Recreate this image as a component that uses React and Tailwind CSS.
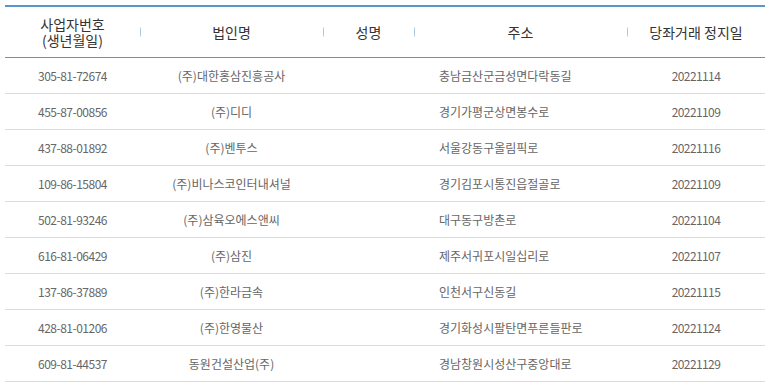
import React from 'react';

const rows = [
  { bizNo: '305-81-72674', corp: '(주)대한홍삼진흥공사', name: '', addr: '충남금산군금성면다락동길', date: '20221114' },
  { bizNo: '455-87-00856', corp: '(주)디디', name: '', addr: '경기가평군상면봉수로', date: '20221109' },
  { bizNo: '437-88-01892', corp: '(주)벤투스', name: '', addr: '서울강동구올림픽로', date: '20221116' },
  { bizNo: '109-86-15804', corp: '(주)비나스코인터내셔널', name: '', addr: '경기김포시통진읍절골로', date: '20221109' },
  { bizNo: '502-81-93246', corp: '(주)삼육오에스앤씨', name: '', addr: '대구동구방촌로', date: '20221104' },
  { bizNo: '616-81-06429', corp: '(주)삼진', name: '', addr: '제주서귀포시일십리로', date: '20221107' },
  { bizNo: '137-86-37889', corp: '(주)한라금속', name: '', addr: '인천서구신동길', date: '20221115' },
  { bizNo: '428-81-01206', corp: '(주)한영물산', name: '', addr: '경기화성시팔탄면푸른들판로', date: '20221124' },
  { bizNo: '609-81-44537', corp: '동원건설산업(주)', name: '', addr: '경남창원시성산구중앙대로', date: '20221129' },
];

const cols = 'grid grid-cols-[135px_183px_91px_213px_138px]';

const HeadCell = ({ children, divider }) => (
  <div className="relative flex items-center justify-center text-center">
    {divider && <span className="absolute left-0 top-1/2 h-[9px] w-px -translate-y-1/2 bg-[#a9cbe6]" />}
    {children}
  </div>
);

export default function App() {
  return (
    <div
      className="bg-white pl-[5px] pt-[5px]"
      style={{ fontFamily: '"Noto Sans CJK KR", "Noto Sans", sans-serif' }}
    >
      <div className="w-[760px] border-t-2 border-[#5b96cb]">
        <div className={`${cols} h-[51px] border-b border-[#5b96cb] text-[14px] leading-[16px] text-[#333]`}>
          <HeadCell>
            <div className="flex flex-col">
              <span>사업자번호</span>
              <span>(생년월일)</span>
            </div>
          </HeadCell>
          <HeadCell divider>법인명</HeadCell>
          <HeadCell divider>성명</HeadCell>
          <HeadCell divider>주소</HeadCell>
          <HeadCell divider>당좌거래 정지일</HeadCell>
        </div>
        {rows.map((r) => (
          <div
            key={r.bizNo}
            className={`${cols} h-[36px] items-center border-b border-[#dcdcdc] text-[12px] text-[#666]`}
          >
            <div className="text-center tracking-[-0.5px]">{r.bizNo}</div>
            <div className="text-center">{r.corp}</div>
            <div className="text-center">{r.name}</div>
            <div className="pl-[25px]">{r.addr}</div>
            <div className="text-center tracking-[-0.6px]">{r.date}</div>
          </div>
        ))}
      </div>
    </div>
  );
}
